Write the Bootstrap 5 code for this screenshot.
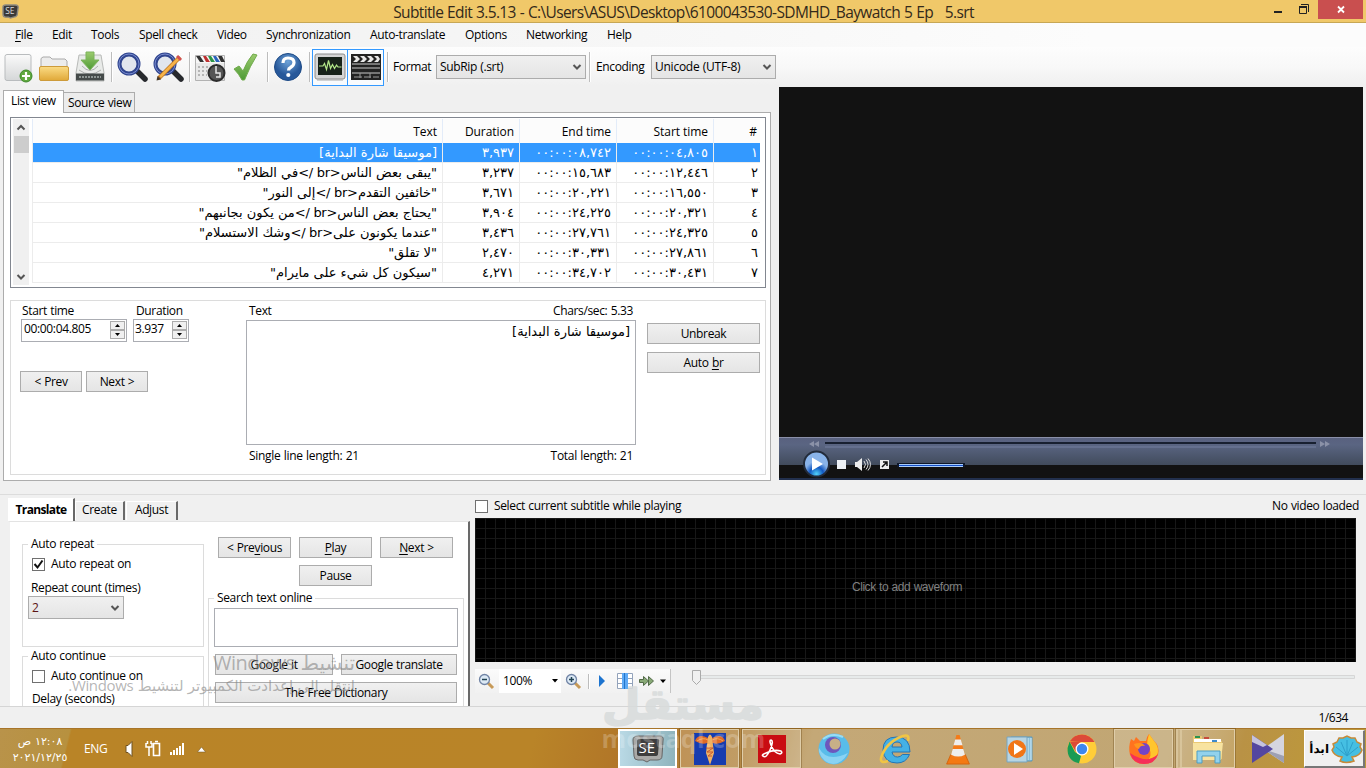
<!DOCTYPE html>
<html lang="en">

<head>
  <meta charset="UTF-8" />
  <meta name="viewport" content="width=device-width, initial-scale=1" />
  <title>Subtitle Edit 3.5.13</title>
  <link href="https://cdn.jsdelivr.net/npm/bootstrap@5.3.0/dist/css/bootstrap.min.css" rel="stylesheet" />
  <style>
    body { width: 1366px; height: 768px; overflow: hidden; background: #f0f0f0; color: #000;
      font: 12px/16px "Open Sans", "DejaVu Sans", sans-serif; letter-spacing: -.35px; word-spacing: .5px; }
    svg { display: block; flex: none; }
    u { text-underline-offset: 2px; }

    /* title and menu */
    .titlebar { height: 23px; background: #f0c869; border-bottom: 1px solid #c7a755; }
    .title-text { font-size: 15.5px; letter-spacing: -.63px; color: #33291a; white-space: pre; }
    .menubar { height: 24px; background: linear-gradient(90deg, #f0f0f0, #fcfcfc 80%); }
    .menubar a { color: #000; text-decoration: none; white-space: nowrap; }
    .toolbar { height: 40px; background: linear-gradient(#fdfdfd, #f8f8f8 50%, #f0f0f0 95%); }
    .tool { width: 36px; height: 37px; display: flex; align-items: center; justify-content: center; }
    .tool.on { border: 1px solid #3399ff; background: #f9fbfd; }
    .sep { width: 6px; height: 30px; flex: none; background: linear-gradient(90deg, transparent 3px, #bdbdbd 3px, #bdbdbd 4px, #fff 4px, #fff 5px, transparent 5px); }

    /* windows controls */
    .wbtn, .wselect { border: 1px solid #acacac; background: linear-gradient(#f0f0f0, #e5e5e5); height: 21px;
      display: flex; align-items: center; justify-content: center; white-space: nowrap; flex: none; }
    .wselect { height: 24px; justify-content: space-between; padding: 0 3px 0 3px; }
    .field { background: #fff; border: 1px solid #abadb3; }
    .groupbox { border: 1px solid #dcdcdc; }
    .group-title { background: #fff; height: 16px; margin-top: -9px; padding: 0 3px; width: max-content; }
    .chk { width: 13px; height: 13px; border: 1px solid #707070; background: #fff; flex: none; }
    .spin { width: 15px; }
    .spin span { height: 9px; border: 1px solid #acacac; background: #f0f0f0; display: flex; align-items: center; justify-content: center; }

    /* upper part */
    .upper { height: 407px; }
    .left-pane { width: 768px; margin-left: 3px; padding-top: 3px; }
    .wtab { border: 1px solid #acacac; border-bottom: 0; height: 20px; background: #ececec; white-space: nowrap; }
    .wtab.on { height: 23px; background: #fff; margin-bottom: -1px; position: relative; }
    .page { height: 369px; border: 1px solid #acacac; background: #fff; padding: 4px 4px 0 6px; }
    .listbox { height: 171px; border: 1px solid #828790; overflow: hidden; padding: 1px 1px 0 2px; }
    .vscroll { width: 16px; background: #f0f0f0; height: 166px; }
    .subs { width: 728px; margin-left: 3px; table-layout: fixed; direction: rtl; font-family: "DejaVu Sans", sans-serif; letter-spacing: -.28px; word-spacing: 0; font-size: 13px; border-collapse: separate; border-spacing: 0; }
    .subs th { height: 24px; background: #fcfcfc; font: 12px/22px "Open Sans", sans-serif; letter-spacing: -.05px; border-left: 1px solid #e3ecf9; padding: 1px 4px 0 5px; text-align: right; direction: ltr; }
    .subs td { height: 20px; line-height: 19px; padding: 0 5px; border-left: 1px solid #ececec; border-bottom: 1px solid #ececec; white-space: nowrap; overflow: hidden; text-align: right; }
    .subs tr > :first-child { padding-right: 2px; }
    .subs tr:not(.picked) td { padding-top: 1px; line-height: 18px; }
    .subs .picked td { background: #3399ff; color: #fff; }
    .arabic-text { font-family: "DejaVu Sans", sans-serif; font-size: 13px; letter-spacing: -.2px; word-spacing: 0; }
    .editor { height: 175px; margin-top: 12px; }

    /* player */
    .player { width: 584px; height: 393px; background: #121212; border-bottom: 2px solid #22304d; }
    .player-bar { height: 28px; flex: none; background: linear-gradient(#59617f, #5a6582 25%, #414b5c); border-top: 1px solid #8a8fa8; }

    /* lower part */
    .lower { height: 213px; border-top: 1px solid #dcdcdc; border-bottom: 1px solid #d5d5d5; overflow: hidden; }
    .tab3d { border-left: 1px solid #fff; border-top: 1px solid #fff; border-right: 2px solid #696969; height: 19px; white-space: nowrap; text-align: center; }
    .tab3d.on { background: #fff; height: 23px; font-weight: 700; letter-spacing: -.65px; }
    .tr-page { width: 462px; height: 190px; background: #fff; border-right: 2px solid #696969; border-left: 2px solid #f0f0f0; border-top: 1px solid #e3e3e3; padding-left: 12px; }
    .wave { width: 881px; height: 144px; background-color: #000; color: #808080;
      background-image: linear-gradient(90deg, #171717 1px, transparent 1px), linear-gradient(#171717 1px, transparent 1px); background-size: 10px 10px; }
    .wave-tools { height: 24px; width: 196px; background: linear-gradient(#fbfbfb, #f1f1f1); border-right: 1px solid #c4c4c4; }
    .statusbar { height: 21px; }

    /* taskbar */
    .taskbar { height: 40px; border-top: 1px solid #a8752a; color: #fff;
      background: linear-gradient(104deg, #b9934a 0, #b7913f 68px, #b98427 70px, #b98428 520px, #b07428 620px, #b58a48 730px, #c4a877 790px, #c1a673 1140px, #b99245 1210px, #bd983b 1290px); }
    .slot { width: 59px; height: 39px; margin-right: 3px; display: flex; align-items: center; justify-content: center; flex: none; }
    .slot.open { border: 1px solid #dfcda9; background: rgba(255, 255, 255, .17); outline: 1px solid rgba(100, 70, 20, .35); outline-offset: 0; }
    .slot.front { border: 2px solid #fff; background: linear-gradient(90deg, #b9d9e5, #8fb4bd); }
    .start { width: 61px; height: 38px; background: #f0f0f0; border: 1px solid #fff; border-right: 2px solid #777; border-bottom: 2px solid #777; color: #000; font: bold 12px "DejaVu Sans", sans-serif; }

    /* notices lying over the window */
    .notice, .brand { position: absolute; pointer-events: none; white-space: nowrap; }
    .notice { right: 1011px; top: 651px; color: rgba(135, 135, 135, .62); direction: rtl; }
    .notice div:first-child { font-size: 20px; line-height: 23px; letter-spacing: -.45px; }
    .notice div:last-child { font-size: 15px; line-height: 22px; letter-spacing: -.35px; }
    .brand { left: 600px; top: 674px; width: 167px; text-align: center; }
    .brand-url { font: bold 25px/24px "Open Sans", sans-serif; letter-spacing: .2px; color: rgba(255, 255, 255, .22); margin-top: -8px; }
  </style>
</head>

<body>

  <!-- Title bar -->
  <div class="titlebar d-flex">
    <svg class="mt-1" width="17" height="15" viewBox="0 0 18 16" style="margin-left:2px"><path d="M1 3Q1 1 4 1H14Q18 1 17 5L16 12Q15 14 12 14L9 15 7 14H4Q1 14 1 11Z" fill="#3a3a3a" stroke="#8e8a80" stroke-width="1.500"/><text x="3.500" y="11" font-size="9" font-family="Open Sans" fill="#ddd" letter-spacing="-.3">SE</text></svg>
    <div class="title-text flex-grow-1 text-center" style="padding-left:77px;line-height:24px">Subtitle Edit 3.5.13 - C:\Users\ASUS\Desktop\6100043530-SDMHD_Baywatch 5 Ep   5.srt</div>
    <svg width="92" height="20" viewBox="0 0 92 20"><path d="M3 11h8v2H3z" fill="#222"/><path d="M28.500 6.500h7v7h-7zM30 4.500h7.500V12" fill="none" stroke="#222"/><path d="M28 6h8v2h-8z" fill="#222"/><path d="M47 0h45v19H47z" fill="#c94f4f"/><path d="M67 6.500l6 6M73 6.500l-6 6" stroke="#fff" stroke-width="1.800"/></svg>
    <div style="width:3px"></div>
  </div>

  <!-- Menu -->
  <nav class="menubar d-flex align-items-center">
    <a href="#" style="margin-left:15px;width:37px"><u>F</u>ile</a>
    <a href="#" style="width:39px">Edit</a>
    <a href="#" style="width:48px">Tools</a>
    <a href="#" style="width:78px">Spell check</a>
    <a href="#" style="width:49px">Video</a>
    <a href="#" style="width:104px">Synchronization</a>
    <a href="#" style="width:95px">Auto-translate</a>
    <a href="#" style="width:61px">Options</a>
    <a href="#" style="width:81px">Networking</a>
    <a href="#">Help</a>
  </nav>

  <!-- Toolbar -->
  <div class="toolbar d-flex align-items-center">
    <svg width="0" height="0" class="position-absolute">
      <defs>
        <linearGradient id="paper" x2="0" y2="1"><stop stop-color="#fafafa"/><stop offset="1" stop-color="#d5d7d8"/></linearGradient>
        <linearGradient id="gold" x2="0" y2="1"><stop stop-color="#fbdc85"/><stop offset="1" stop-color="#e0a838"/></linearGradient>
        <linearGradient id="leaf" x2="0" y2="1"><stop stop-color="#9ccc6e"/><stop offset="1" stop-color="#4d9a35"/></linearGradient>
        <radialGradient id="blue" cy=".3"><stop stop-color="#6fa3d8"/><stop offset="1" stop-color="#27589a"/></radialGradient>
        <radialGradient id="play" cy=".9"><stop stop-color="#52d3fb"/><stop offset=".55" stop-color="#1257c0"/><stop offset="1" stop-color="#89b3e9"/></radialGradient>
      </defs>
    </svg>
    <div class="tool"><svg width="32" height="32" viewBox="0 0 32 32"><rect x="3" y="3.500" width="26" height="26" rx="2" fill="url(#paper)" stroke="#b9bcbe"/><circle cx="24" cy="25" r="6" fill="#5fa83f" stroke="#3f8a2b"/><path d="M24 21v8M20 25h8" stroke="#fff" stroke-width="2.200"/></svg></div>
    <div class="tool"><svg width="32" height="32" viewBox="0 0 32 32"><path d="M3 18V7.500L5 6h7l2 2h13l2 2v9z" fill="#ececec" stroke="#aaa"/><rect x="1.500" y="15.500" width="29" height="14" rx="1.500" fill="url(#gold)" stroke="#cd9b3a"/></svg></div>
    <div class="tool"><svg width="32" height="32" viewBox="0 0 32 32"><path d="M5 4h22l3 18v8H2v-8z" fill="#e9ebe9" stroke="#b8bab8"/><path d="M8 15q8 9 16 0M5 19q11 8 22 0" fill="none" stroke="#aeb1b0"/><path d="M2 22.500h28v7H2z" fill="#454b4a"/><path d="M5 26h22" stroke="#8e9694" stroke-width="2" stroke-dasharray="2 1"/><path d="M12 1h8v8h5L16 19 7 9h5z" fill="url(#leaf)" stroke="#7db35c"/></svg></div>
    <div class="sep"></div>
    <div class="tool"><svg width="32" height="32" viewBox="0 0 32 32"><path d="M20 19l9 9" stroke="#27292d" stroke-width="5.500" stroke-linecap="round"/><circle cx="13" cy="13" r="9.500" fill="#e1e6ee" stroke="#30458f" stroke-width="4"/><circle cx="13" cy="13" r="10" fill="none" stroke="#7a8dd0"/></svg></div>
    <div class="tool"><svg width="32" height="32" viewBox="0 0 32 32"><path d="M20 19l9 9" stroke="#27292d" stroke-width="5.500" stroke-linecap="round"/><circle cx="13" cy="13" r="9.500" fill="#e1e6ee" stroke="#30458f" stroke-width="4"/><circle cx="13" cy="13" r="10" fill="none" stroke="#7a8dd0"/><path d="M7 27L28 6" stroke="#b66c18" stroke-width="4"/><path d="M8 26L26.500 7.500" stroke="#f6b34a" stroke-width="2.800"/><path d="M26 4l4 4-2 2-4-4z" fill="#d25050"/><path d="M4.500 29.500l1-4.500 3.500 3.500z" fill="#453525"/></svg></div>
    <div class="sep"></div>
    <div class="tool"><svg width="32" height="32" viewBox="0 0 32 32"><path d="M1.500 4.500h29v25h-29z" fill="#e8e8e8" stroke="#b2b2b2"/><path d="M2 5h28v7H2z" fill="#f6f6f6"/><path d="M2 5h4l4 6H6zM24 5h4l3 6h-4z" fill="#333"/><path d="M9 5h3l4 6h-4z" fill="#bd3030"/><path d="M14 5h3l4 6h-4z" fill="#2b9549"/><path d="M19 5h3l4 6h-4z" fill="#2a62bd"/><path d="M4 16h11M4 20h9M4 24h9" stroke="#b5b5b5" stroke-width="2" stroke-dasharray="2 2"/><circle cx="22.500" cy="22" r="8" fill="#555" stroke="#2c2c2c" stroke-width="2"/><path d="M22 15v7h4v4h-4" fill="none" stroke="#e6e6e6" stroke-width="1.500"/></svg></div>
    <div class="tool"><svg width="32" height="32" viewBox="0 0 32 32"><path d="M4 18l5-3 4 5Q17 10 23 3l4 1Q20 15 14.500 29H12Q9 23 4 18z" fill="url(#leaf)" stroke="#70aa4c"/></svg></div>
    <div class="sep"></div>
    <div class="tool"><svg width="32" height="32" viewBox="0 0 32 32"><circle cx="16" cy="16" r="13.500" fill="url(#blue)" stroke="#1e4b87"/><path d="M11 12q0-5 5-5 6 0 6 4.500 0 3-3.500 5-2 1-2 3" fill="none" stroke="#fff" stroke-width="3.200"/><circle cx="16.300" cy="24" r="2.100" fill="#fff"/></svg></div>
    <div class="sep"></div>
    <div class="tool on"><svg width="32" height="32" viewBox="0 0 32 32"><rect x="1" y="3" width="30" height="25" rx="2" fill="#d5d5d5" stroke="#8c8c8c"/><path d="M4 6h24v18H4z" fill="#182219"/><path d="M5 15h4l1.500-2.500 2 6 2-9 2 8 2-4 2 4 2-3.500 1.500 2h3.500" fill="none" stroke="#b4e889" stroke-width="1.200"/><path d="M3 29h26" stroke="#aaa"/></svg></div>
    <div class="tool on border-start-0"><svg width="32" height="32" viewBox="0 0 32 32"><path d="M1 3h30v26H1z" fill="#222"/><path d="M3 5h4l3 3-3 3H3l3-3zM10 5h4l3 3-3 3h-4l3-3zM17 5h4l3 3-3 3h-4l3-3zM24 5h4l2 3-2 3h-4l3-3z" fill="#e8e8e8"/><path d="M2 13h28M2 17h28M2 22h28" stroke="#c9c9c9"/><path d="M4 26h8M14 26h7M23 26h6M10 22v5M20 22v5" stroke="#999"/></svg></div>
    <div class="sep"></div>
    <span style="width:46px;padding-left:3px">Format</span>
    <div class="wselect" style="width:150px">SubRip (.srt)<svg width="10" height="8" viewBox="0 0 10 8"><path d="M1.500 2L5 5.500 8.500 2" fill="none" stroke="#555" stroke-width="2"/></svg></div>
    <div class="sep ms-0"></div>
    <span style="width:59px;padding-left:4px">Encoding</span>
    <div class="wselect" style="width:125px"><span style="letter-spacing:-.25px">Unicode (UTF-8)</span><svg width="10" height="8" viewBox="0 0 10 8"><path d="M1.500 2L5 5.500 8.500 2" fill="none" stroke="#555" stroke-width="2"/></svg></div>
  </div>

  <div class="upper d-flex">
    <!-- List view -->
    <div class="left-pane">
      <div class="d-flex align-items-end">
        <div class="wtab on" style="width:61px;padding:2px 0 0 7px">List view</div>
        <div class="wtab" style="width:71px;padding:2px 0 0 4px;border-left:0">Source view</div>
      </div>
      <div class="page">
        <div class="listbox d-flex">
          <div class="vscroll d-flex flex-column align-items-center">
            <svg width="16" height="17" viewBox="0 0 16 17"><path d="M4.500 10.500L8 7l3.500 3.500" fill="none" stroke="#555" stroke-width="2"/></svg>
            <div style="width:15px;height:17px;background:#cdcdcd"></div>
            <svg class="mt-auto" width="16" height="17" viewBox="0 0 16 17"><path d="M4.500 7L8 10.500 11.500 7" fill="none" stroke="#555" stroke-width="2"/></svg>
          </div>
          <div>
            <table class="subs">
              <colgroup><col style="width:47px"><col style="width:97px"><col style="width:97px"><col style="width:77px"><col></colgroup>
              <thead>
                <tr><th>#</th><th>Start time</th><th>End time</th><th>Duration</th><th>Text</th></tr>
              </thead>
              <tbody id="sub-rows"></tbody>
            </table>
          </div>
        </div>

        <!-- Editor -->
        <div class="editor groupbox d-flex">
          <div style="width:235px;padding:2px 0 0 9px">
            <div class="d-flex"><span style="width:116px;padding-left:2px">Start time</span><span>Duration</span></div>
            <div class="d-flex" style="gap:6px">
              <div class="field d-flex justify-content-between" style="width:106px;height:23px;padding:1px 1px 1px 2px;margin-left:1px">00:00:04.805
                <div class="spin"><span>
                  <svg width="5" height="3"><path d="M0 3L2.500 0 5 3z"/></svg></span><span><svg width="5" height="3"><path d="M0 0h5L2.500 3z"/></svg></span></div>
              </div>
              <div class="field d-flex justify-content-between" style="width:56px;height:23px;padding:1px 1px 1px 1px">3.937
                <div class="spin"><span>
                  <svg width="5" height="3"><path d="M0 3L2.500 0 5 3z"/></svg></span><span><svg width="5" height="3"><path d="M0 0h5L2.500 3z"/></svg></span></div>
              </div>
            </div>
            <div class="d-flex gap-1" style="margin-top:29px">
              <div class="wbtn" style="width:62px">&lt; Prev</div>
              <div class="wbtn" style="width:62px">Next &gt;</div>
            </div>
          </div>
          <div style="width:390px;padding-top:2px">
            <div class="d-flex justify-content-between" style="padding:0 3px"><span>Text</span><span>Chars/sec: 5.33</span></div>
            <div class="field arabic-text" dir="rtl" style="height:125px;margin-top:1px;padding:3px 5px">[موسيقا شارة البداية]</div>
            <div class="d-flex justify-content-between" style="padding:3px 3px 0;letter-spacing:-.3px"><span>Single line length: 21</span><span>Total length: 21</span></div>
          </div>
          <div style="margin-left:11px;padding-top:22px">
            <div class="wbtn" style="width:113px">Unbreak</div>
            <div class="wbtn" style="width:113px;margin-top:8px"><span>Auto <u>b</u>r</span></div>
          </div>
        </div>
      </div>
    </div>

    <!-- Video player -->
    <div class="player d-flex flex-column" style="margin-left:8px">
      <div style="height:350px;flex:none"></div>
      <div class="player-bar"></div>
      <svg width="584" height="42" viewBox="0 0 584 42" style="margin-top:-29px">
        <path d="M46 11h491" stroke="#6a7694" stroke-width="1.500"/>
        <path d="M35 5l-5 3 5 3zM40 5l-5 3 5 3zM541 5l5 3-5 3zM546 5l5 3-5 3z" fill="#8b92a8"/>
        <path d="M46 7h491" stroke="#182030" stroke-width="2"/>
        <circle cx="37.500" cy="28" r="12.500" fill="url(#play)" stroke="#222b3b" stroke-width="2"/><path d="M33 21.500v13l11-6.500z" fill="#fff"/>
        <path d="M58 24h9v9h-9z" fill="#edf1f5"/>
        <path d="M76 26h2l5-4v13l-5-4h-2z" fill="#eee"/><path d="M85 25q3 3.500 0 7M87 23.500q4 5 0 10M89 22.500q5 6 0 12" fill="none" stroke="#ddd"/>
        <path d="M101 24h9v9h-9z" fill="#eee"/><path d="M103 31l5-5M104 26h4v4" stroke="#111" stroke-width="1.500" fill="none"/>
        <path d="M118 29h68" stroke="#10182a" stroke-width="4"/><path d="M120 29.500h64" stroke="#a9ccfa" stroke-width="3"/><path d="M120 29.500h64" stroke="#1550c8"/>
      </svg>
    </div>
  </div>

  <div class="lower d-flex">
    <!-- Translate tab -->
    <div style="width:467px;padding:3px 0 0 8px;flex:none">
      <div class="d-flex align-items-end" style="height:23px">
        <div class="tab3d on" style="width:67px;padding-top:3px">Translate</div>
        <div class="tab3d" style="width:50px;margin-bottom:1px">Create</div>
        <div class="tab3d" style="width:52px;margin-bottom:1px;margin-left:1px">Adjust</div>
      </div>
      <div class="tr-page d-flex">
        <div style="width:182px;padding-top:22px;margin-right:4px;flex:none">
          <div class="groupbox" style="height:103px;padding-left:5px">
            <div class="group-title">Auto repeat</div>
            <div class="d-flex align-items-center" style="gap:6px;margin:4px 0 0 4px"><div class="chk"><svg width="11" height="11" viewBox="0 0 11 11"><path d="M1.500 5l3 3.500L9.500 1.500" fill="none" stroke="#111" stroke-width="2"/></svg></div>Auto repeat on</div>
            <div style="margin:8px 0 0 3px">Repeat count (times)</div>
            <div class="wselect" style="width:96px;height:23px"><span style="color:#5c1414">2</span><svg width="10" height="8" viewBox="0 0 10 8"><path d="M1.500 2L5 5.500 8.500 2" fill="none" stroke="#555" stroke-width="2"/></svg></div>
          </div>
          <div class="groupbox" style="height:80px;margin-top:9px;padding-left:5px">
            <div class="group-title">Auto continue</div>
            <div class="d-flex align-items-center" style="gap:6px;margin:4px 0 0 4px"><div class="chk"></div>Auto continue on</div>
            <div style="margin:7px 0 0 4px">Delay (seconds)</div>
          </div>
        </div>
        <div style="width:256px;padding-top:15px;flex:none">
          <div class="d-flex" style="gap:8px;padding-left:10px">
            <div class="wbtn" style="width:73px"><span>&lt; Pre<u>v</u>ious</span></div>
            <div class="wbtn" style="width:73px"><span><u>P</u>lay</span></div>
            <div class="wbtn" style="width:73px"><span><u>N</u>ext &gt;</span></div>
          </div>
          <div class="wbtn" style="width:73px;margin:7px 0 0 91px">Pause</div>
          <div class="groupbox" style="height:130px;margin-top:12px;padding-left:5px">
            <div class="group-title">Search text online</div>
            <div class="field" style="width:244px;height:39px;margin-top:2px"></div>
            <div class="d-flex" style="gap:8px;margin:7px 0 0 1px">
              <div class="wbtn" style="width:118px">Google it</div>
              <div class="wbtn" style="width:116px">Google translate</div>
            </div>
            <div class="wbtn" style="width:242px;margin:7px 0 0 1px">The Free Dictionary</div>
          </div>
        </div>
      </div>
    </div>

    <!-- Waveform -->
    <div style="margin-left:8px;width:884px;flex:none">
      <div class="d-flex align-items-center" style="height:23px;gap:6px;padding-bottom:1px">
        <div class="chk"></div><span>Select current subtitle while playing</span><span class="ms-auto">No video loaded</span>
      </div>
      <div class="wave d-flex align-items-center justify-content-center" style="font-family:'Liberation Sans',sans-serif;letter-spacing:-.45px;padding:0 17px 6px 0">Click to add waveform</div>
      <div class="d-flex" style="margin-top:7px">
        <div class="wave-tools d-flex align-items-center">
          <svg width="24" height="20" viewBox="0 0 24 20"><path d="M13 12l5 5" stroke="#c79a58" stroke-width="3"/><circle cx="9.500" cy="8.500" r="5" fill="#dce9f5" stroke="#7184a5" stroke-width="1.300"/><path d="M7 8.500h5" stroke="#245" stroke-width="1.500"/></svg>
          <div class="bg-white d-flex align-items-center justify-content-between" style="width:62px;height:24px;padding:0 3px 0 4px">100%<svg width="6" height="4"><path d="M0 0h6L3 3.500z"/></svg></div>
          <svg width="25" height="20" viewBox="0 0 25 20"><path d="M14 12l5 5" stroke="#c79a58" stroke-width="3"/><circle cx="10.500" cy="8.500" r="5" fill="#dce9f5" stroke="#7184a5" stroke-width="1.300"/><path d="M8 8.500h5M10.500 6v5" stroke="#245" stroke-width="1.500"/></svg>
          <div class="sep" style="height:15px;margin:0 4px 0 -1px"></div>
          <svg width="76" height="20" viewBox="0 0 76 20" style="margin-left:-2px"><path d="M6 4v12l6-6z" fill="#1d74cf"/><path d="M24.500 2.500h15v15h-15zM24 7.500h16M24 12.500h16" fill="#fff" stroke="#93a3bb"/><path d="M29 2h6v16h-6z" fill="#5eaaf6"/><path d="M31.500 2v16" stroke="#2275c9"/><path d="M46.500 8.500h4v-3l5 4.500-5 4.500v-3h-4zM55.500 8.500v-3l5 4.500-5 4.500z" fill="#88a976" stroke="#526b48"/><path d="M67 8.500h6l-3 3.500z"/></svg>
        </div>
        <svg width="688" height="24" viewBox="0 0 688 24" style="margin-left:-4px"><path d="M30.500 6.500h657v3h-657z" fill="#e7eaea" stroke="#d6d6d6"/><path d="M25.500 1.500h8v10l-4 4-4-4z" fill="#f0f0f0" stroke="#aaa"/></svg>
      </div>
    </div>
  </div>

  <div class="statusbar text-end" style="padding:3px 18px 0 0;letter-spacing:-.45px">1/634</div>

  <!-- Taskbar -->
  <div class="taskbar d-flex">
    <div class="text-center" style="width:83px;font:11px/16px 'DejaVu Sans',sans-serif;padding:5px 3px 0 0;letter-spacing:-.8px" dir="rtl">١٢:٠٨ ص<br>٢٠٢١/١٢/٢٥</div>
    <div style="padding:12px 0 0 1px;width:40px">ENG</div>
    <svg width="90" height="39" viewBox="0 0 90 39">
      <path d="M3 16.500h2l4-4v15l-4-4H3z" fill="#fff" stroke="#6f5222"/><path d="M23 14v4h6v-4M24.500 15v-3M28 15v-3M26 18v9" stroke="#fff" stroke-width="1.500" fill="none"/><path d="M30.500 14.500h6v12h-6zM32 12.500h3" fill="none" stroke="#fff" stroke-width="1.600"/>
      <path d="M47 23h2v3h-2zM50 21h2v5h-2zM53 19h2v7h-2zM56 17h2v9h-2zM59 14h2v12h-2z" fill="#fff"/><path d="M74.500 23l4-5 4 5z" fill="#fff" stroke="#6f5222" stroke-width=".5"/>
    </svg>
    <div style="width:405px"></div>

    <div class="slot front"><svg width="32" height="30" viewBox="0 0 32 30"><path d="M1 6Q1 2 6 2h22q4 0 3 5l-1 15q0 4-5 4h-7l-3 2-4-2H6q-4 0-4-4z" fill="#a9a9a7" stroke="#666"/><path d="M5 7q0-2 3-2h17q3 0 2 3l-1 12q0 2-3 2H8q-3 0-3-2z" fill="#3e3e3e"/><text x="6.500" y="19" font-size="15" font-family="Open Sans" fill="#fff" letter-spacing="0">SE</text></svg></div>
    <div class="slot open"><svg width="32" height="32" viewBox="0 0 32 32"><path d="M0 0h32v32H0z" fill="#173cae"/><path d="M1 8Q4 0 14 5h4Q28 0 31 8q-7 4-12 2h-6Q8 12 1 8z" fill="#df6a27"/><path d="M3 8q6-4 11-1h4q6-3 11 1" fill="none" stroke="#f2a656"/><path d="M14 4q2-5 4 0l2 16-4 12-4-12z" fill="#efb164"/><path d="M12 15h7l-6 4h6l-5 4h4" stroke="#c7592e" fill="none"/></svg></div>
    <div class="slot open"><svg width="28" height="28" viewBox="0 0 28 28"><path d="M0 0h28v28H0z" fill="#c90c12"/><path d="M5 21q3 3 7-6 4-9 1-10-2 0 0 5 3 8 9 9 3-1 1-3-7-2-15 2-5 2-3 3z" fill="none" stroke="#fff" stroke-width="1.600"/></svg></div>
    <div class="slot"><svg width="34" height="34" viewBox="0 0 34 34"><circle cx="17" cy="17" r="15.500" fill="#59bce9"/><path d="M2 16Q10 31 31 21 25 32 16 32 6 31 2 20z" fill="#8ad3f3"/><circle cx="16" cy="13" r="8" fill="#6d57bd"/><circle cx="18" cy="12" r="5.500" fill="#c7b087"/><path d="M6 7Q15 0 26 5" fill="none" stroke="#9adcf5" stroke-width="2"/></svg></div>
    <div class="slot"><svg width="34" height="34" viewBox="0 0 34 34"><path d="M4 18Q4 5 17.500 5T31 20H13q1 5 5.500 5 3 0 5-2.500h7Q27 31 18 31 5 31 4 18zM13 15h10q-.5-5-5-5t-5 5z" fill="#44b1e6" stroke="#2475b5"/><path d="M29 9q2-7-5-5Q7 10 2 26q-1 6 7 3" fill="none" stroke="#f1c544" stroke-width="2.500"/></svg></div>
    <div class="slot"><svg width="26" height="32" viewBox="0 0 32 34" preserveAspectRatio="none"><path d="M7 23h18l5 10H2z" fill="#f47913" stroke="#d2610b"/><path d="M14 2h4l7 23q-9 5-18 0z" fill="#f47b19"/><path d="M12.500 7h7l2 6h-11zM9.500 17h13l2 6q-8 4-17 0z" fill="#eee"/></svg></div>
    <div class="slot"><svg width="30" height="30" viewBox="2 2 30 30"><path d="M8 5h21v24H8z" fill="#8bc0dc" stroke="#5c98b8"/><path d="M25 6v22M28 6v22" stroke="#d5edf8"/><path d="M4 5h20v25H4z" fill="#b7d5e4" stroke="#76a4bf"/><circle cx="14" cy="17" r="9" fill="#f17618"/><path d="M11 11v12l9-6z" fill="#fff"/></svg></div>
    <div class="slot"><svg width="30" height="30" viewBox="0 0 30 30"><circle cx="15" cy="15" r="14.500" fill="#ffcd38"/><path d="M2.500 7.500Q7 .5 15 .5t12.500 7.500H15z" fill="#dc4a38"/><path d="M3 8l6 10 3-9 3-1.500z" fill="#dc4a38"/><path d="M2.500 7.500L8 18l6 4-2 7.200Q0 27 .5 14z" fill="#1a9b54"/><circle cx="15" cy="15" r="6.500" fill="#fff"/><circle cx="15" cy="15" r="5.200" fill="#3d87ee"/></svg></div>
    <div class="slot open"><svg width="32" height="32" viewBox="0 0 32 32"><path d="M3 6l3 2 2-4 4 4h6q1-5 3-7l5 7q6 5 4 14-4 9-14 9T2 22Q0 14 3 6z" fill="#ff731f"/><path d="M21 1l5 7q6 6 3 15l-8 3q4-7-2-13 0-6 2-12z" fill="#ffc52d"/><path d="M2 20q3 11 14 11t14-10q-8 8-18 4-6-2-10-5z" fill="#f52f59"/><circle cx="16" cy="16" r="6" fill="#7444c7"/><path d="M6 11q8-3 11 2-5-1-6 3-4-1-5-5z" fill="#ff951e"/></svg></div>
    <div class="slot open" style="border-left:6px double #d8c49b"><svg width="34" height="32" viewBox="0 0 34 32"><path d="M2 3h9v3h10v2h10v18H2z" fill="#eac974"/><path d="M3 6h27v3H3z" fill="#fff"/><path d="M4 3h5v2H4z" fill="#2b9350"/><path d="M13 4h5v2h-5z" fill="#c74c3c"/><path d="M21 7h5v2h-5z" fill="#3e8acb"/><path d="M2 10h30l-2 17H2z" fill="#f8e3a0"/><path d="M6 30V18h23v12h-5v-7H11v7z" fill="#92d2ec" stroke="#4e9dc1"/></svg></div>
    <div class="slot"><svg width="34" height="32" viewBox="0 0 34 32"><path d="M33 1L12 16l21 14z" fill="#d5d5df"/><path d="M33 30L12 16l21 7z" fill="#9ea0b2"/><path d="M1 2l21 14L1 30z" fill="#5446a0"/><path d="M1 2l15 10-4 2L1 9z" fill="#c5c2de"/></svg></div>
    <div class="start d-flex align-items-center justify-content-end" style="margin:1px 0 0 4px;gap:2px"><span>ابدأ</span><svg width="32" height="30" viewBox="0 0 32 30"><path d="M9 27l2-4Q3 22 1 16l2-3-1-3 4-2 2-4 4 0 4-2 4 2 4 0 2 4 4 2-1 3 2 3q-2 6-10 7l2 4q-8 3-14 0z" fill="#45bfe3" stroke="#c78a38" stroke-width="1.500"/><path d="M16 22V6M16 22L10 8M16 22L22 8M16 22L5 13M16 22l11-9" stroke="#2d9fca"/></svg></div>
  </div>

  <!-- Notices over the window -->
  <div class="notice"><div>تنشيط Windows</div><div>انتقل إلى إعدادت الكمبيوتر لتنشيط Windows.</div></div>
  <div class="brand">
    <svg width="167" height="60" viewBox="0 0 167 60"><text x="83" y="45" direction="rtl" text-anchor="middle" textLength="162" lengthAdjust="spacingAndGlyphs" font-family="DejaVu Sans" font-weight="bold" font-size="42" fill="#d8dbdb" stroke="#d8dbdb" stroke-width="1.500" stroke-linejoin="round" opacity=".85">مستقل</text></svg>
    <div class="brand-url">mostaql.com</div>
  </div>

  <script>
    const subtitles = [
      ['١', '٠٠:٠٠:٠٤,٨٠٥', '٠٠:٠٠:٠٨,٧٤٢', '٣,٩٣٧', '[موسيقا شارة البداية]'],
      ['٢', '٠٠:٠٠:١٢,٤٤٦', '٠٠:٠٠:١٥,٦٨٣', '٣,٢٣٧', '"يبقى بعض الناس<br />في الظلام"'],
      ['٣', '٠٠:٠٠:١٦,٥٥٠', '٠٠:٠٠:٢٠,٢٢١', '٣,٦٧١', '"خائفين التقدم<br />إلى النور"'],
      ['٤', '٠٠:٠٠:٢٠,٣٢١', '٠٠:٠٠:٢٤,٢٢٥', '٣,٩٠٤', '"يحتاج بعض الناس<br />من يكون بجانبهم"'],
      ['٥', '٠٠:٠٠:٢٤,٣٢٥', '٠٠:٠٠:٢٧,٧٦١', '٣,٤٣٦', '"عندما يكونون على<br />وشك الاستسلام"'],
      ['٦', '٠٠:٠٠:٢٧,٨٦١', '٠٠:٠٠:٣٠,٣٣١', '٢,٤٧٠', '"لا تقلق"'],
      ['٧', '٠٠:٠٠:٣٠,٤٣١', '٠٠:٠٠:٣٤,٧٠٢', '٤,٢٧١', '"سيكون كل شيء على مايرام"']
    ];

    const tbody = document.getElementById('sub-rows');
    subtitles.forEach((line, index) => {
      const tr = document.createElement('tr');
      if (index === 0) tr.classList.add('picked');
      line.forEach(value => {
        const td = document.createElement('td');
        td.textContent = value;
        tr.appendChild(td);
      });
      tbody.appendChild(tr);
    });
  </script>

  <script src="https://cdn.jsdelivr.net/npm/bootstrap@5.3.0/dist/js/bootstrap.bundle.min.js"></script>
</body>

</html>
